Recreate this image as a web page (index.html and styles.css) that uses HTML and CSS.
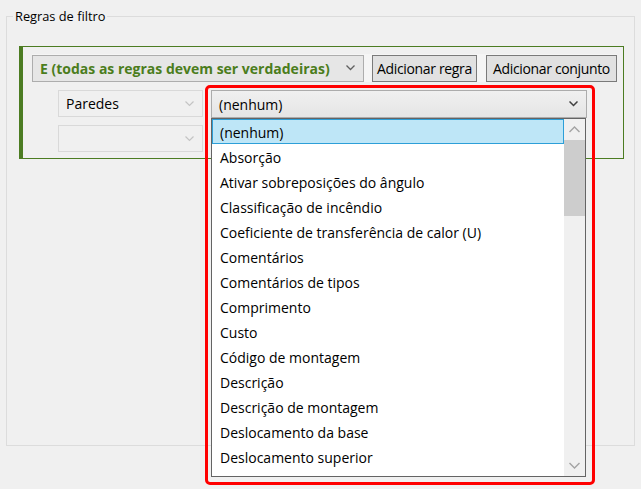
FILE: index.html
```html
<!DOCTYPE html>
<html lang="pt">
<head>
<meta charset="utf-8">
<link rel="stylesheet" href="styles.css">
</head>
<body>
<fieldset class="group">
  <legend class="group-title">Regras de filtro</legend>
  <div class="rules">
    <div class="row row-top">
      <div class="combo combo-logic">
        <span class="logic-text">E (todas as regras devem ser verdadeiras)</span>
        <svg class="chev" width="9" height="6" viewBox="0 0 9 6"><polyline points="0.5,0.5 4.5,4.5 8.5,0.5" fill="none" stroke="#606060" stroke-width="1.3"/></svg>
      </div>
      <button class="btn btn-rule">Adicionar regra</button>
      <button class="btn btn-set">Adicionar conjunto</button>
    </div>
    <div class="row row-rule">
      <div class="combo combo-cat">
        <span>Paredes</span>
        <svg class="chev" width="9" height="6" viewBox="0 0 9 6"><polyline points="0.5,0.5 4.5,4.5 8.5,0.5" fill="none" stroke="#c4c4c4" stroke-width="1.2"/></svg>
      </div>
      <div class="param-wrap">
        <div class="combo combo-param">
          <span>(nenhum)</span>
          <svg class="chev" width="9" height="6" viewBox="0 0 9 6"><polyline points="0.5,0.5 4.5,4.5 8.5,0.5" fill="none" stroke="#404040" stroke-width="1.5"/></svg>
        </div>
        <div class="dropdown">
          <ul class="list">
            <li class="item selected">(nenhum)</li>
            <li class="item">Absorção</li>
            <li class="item">Ativar sobreposições do ângulo</li>
            <li class="item">Classificação de incêndio</li>
            <li class="item">Coeficiente de transferência de calor (U)</li>
            <li class="item">Comentários</li>
            <li class="item">Comentários de tipos</li>
            <li class="item">Comprimento</li>
            <li class="item">Custo</li>
            <li class="item">Código de montagem</li>
            <li class="item">Descrição</li>
            <li class="item">Descrição de montagem</li>
            <li class="item">Deslocamento da base</li>
            <li class="item">Deslocamento superior</li>
            <li class="item">Exportar para IFC</li>
          </ul>
          <div class="scrollbar">
            <div class="sb-arrow">
              <svg width="11" height="7" viewBox="0 0 11 7"><polyline points="0.5,6 5.5,1 10.5,6" fill="none" stroke="#a3a3a3" stroke-width="1.4"/></svg>
            </div>
            <div class="sb-thumb"></div>
            <div class="sb-track"></div>
            <div class="sb-arrow">
              <svg width="11" height="7" viewBox="0 0 11 7"><polyline points="0.5,1 5.5,6 10.5,1" fill="none" stroke="#a3a3a3" stroke-width="1.4"/></svg>
            </div>
          </div>
        </div>
        <div class="annotation"></div>
      </div>
    </div>
    <div class="row row-rule">
      <div class="combo combo-cat">
        <span></span>
        <svg class="chev" width="9" height="6" viewBox="0 0 9 6"><polyline points="0.5,0.5 4.5,4.5 8.5,0.5" fill="none" stroke="#c4c4c4" stroke-width="1.2"/></svg>
      </div>
    </div>
  </div>
</fieldset>
</body>
</html>
```

FILE: styles.css
```css
html, body {
  margin: 0;
  padding: 0;
  background: #f0f0f0;
  width: 641px;
  height: 489px;
  overflow: hidden;
  font-family: "Open Sans", "Noto Sans", sans-serif;
  font-size: 14px;
  color: #000;
}

.group {
  box-sizing: border-box;
  margin: 8px 0 0 6px;
  width: 629px;
  height: 438px;
  border: 1px solid #dcdcdc;
  padding: 0 10px 0 12px;
  min-width: 0;
}

.group-title {
  padding: 0 2px;
  margin-left: -6px;
  font-size: 12.8px;
  line-height: 16px;
  color: #000;
}

.rules {
  box-sizing: border-box;
  margin-top: 22px;
  width: 605px;
  height: 113px;
  border: 1px solid #4c7c22;
  border-left: 4px solid #4c7c22;
  padding: 7px 6px 0 9px;
  display: flex;
  flex-direction: column;
  gap: 8px;
}

.row {
  display: flex;
  align-items: center;
}

.row-top {
  gap: 8px;
  height: 28px;
  background: #f5f5f5;
}

.row-rule {
  padding-left: 26px;
  gap: 8px;
  height: 27px;
}

.combo {
  box-sizing: border-box;
  height: 27px;
  display: flex;
  align-items: center;
  justify-content: space-between;
  padding: 0 8px 0 7px;
  white-space: nowrap;
}

.combo-logic {
  width: 332px;
  background: #e6e6e6;
  border: 1px solid #adadad;
}

.logic-text {
  color: #4b7d1c;
  font-weight: 700;
  font-size: 14px;
}

.btn {
  box-sizing: border-box;
  height: 27px;
  background: #e1e1e1;
  border: 1px solid #7a7a7a;
  font-family: "Open Sans", "Noto Sans", sans-serif;
  font-size: 14px;
  letter-spacing: -0.35px;
  padding: 0;
  color: #000;
  margin: 0;
  white-space: nowrap;
  text-align: center;
}

.btn-rule {
  width: 105px;
}

.btn-set {
  width: 131px;
  margin-left: 1px;
}

.combo-cat {
  width: 145px;
  background: #f0f0f0;
  border: 1px solid #d9d9d9;
}

.param-wrap {
  position: relative;
  width: 376px;
  height: 28px;
  margin-top: 1px;
}

.combo-param {
  width: 376px;
  height: 28px;
  background: linear-gradient(#f0f0f0, #e5e5e5);
  border: 1px solid #acacac;
  padding-right: 8px;
}

.dropdown {
  position: absolute;
  left: 0;
  top: 28px;
  box-sizing: border-box;
  width: 375px;
  height: 359px;
  background: #fff;
  border: 1px solid #646464;
  display: flex;
  z-index: 2;
  overflow: hidden;
}

.list {
  list-style: none;
  margin: 0;
  padding: 0;
  flex: 1;
  min-width: 0;
}

.item {
  box-sizing: border-box;
  height: 25px;
  line-height: 23px;
  padding: 1px 0 0 7px;
  border: 1px solid transparent;
  white-space: nowrap;
}

.item.selected {
  background: #bee6f7;
  border-color: #2d9fd8;
}

.scrollbar {
  width: 21px;
  background: #f0f0f0;
  display: flex;
  flex-direction: column;
}

.sb-arrow {
  height: 21px;
  display: flex;
  align-items: center;
  justify-content: center;
}

.sb-thumb {
  height: 76px;
  background: #cdcdcd;
}

.sb-track {
  flex: 1;
}

.annotation {
  position: absolute;
  left: -6px;
  top: -5px;
  width: 390px;
  height: 400px;
  box-sizing: border-box;
  border: 3px solid #ff0000;
  border-radius: 5px;
  z-index: 3;
  pointer-events: none;
}
```
